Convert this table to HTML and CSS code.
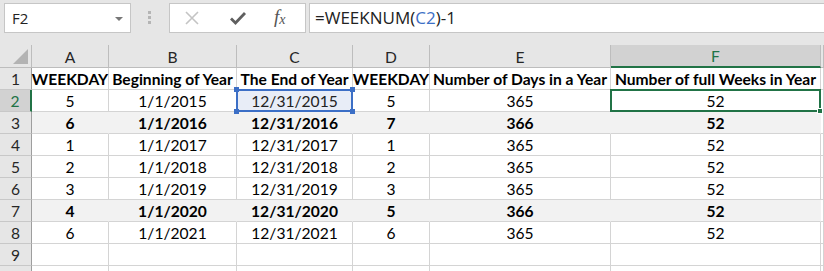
FILE: index.html
```html
<!DOCTYPE html>
<html>
<head lang="en">
    <meta charset="UTF-8">
    <title>Weeks in Year</title>
    <link rel="stylesheet" href="styles.css">
</head>
<body>
<div id="window">
    <div class="formula-bar">
        <div class="name-box">
            <span>F2</span>
            <span class="drop"></span>
        </div>
        <div class="grip"><i></i><i></i><i></i></div>
        <div class="fx-box">
            <svg class="ico-cancel" width="16" height="16" viewBox="0 0 16 16">
                <path d="M2 2 L14 14 M14 2 L2 14" stroke="#c4c4c4" stroke-width="1.6" fill="none"/>
            </svg>
            <svg class="ico-enter" width="18" height="16" viewBox="0 0 18 16">
                <path d="M2 8.5 L6.5 13 L16 3" stroke="#5f5f5f" stroke-width="2.8" fill="none"/>
            </svg>
            <span class="fx">f<sub>x</sub></span>
        </div>
        <div class="formula">=WEEKNUM(<span class="ref">C2</span>)-1</div>
    </div>

    <div class="sheet">
        <div class="corner"><span class="tri"></span></div>
        <div class="col-hd">A</div>
        <div class="col-hd">B</div>
        <div class="col-hd">C</div>
        <div class="col-hd">D</div>
        <div class="col-hd">E</div>
        <div class="col-hd active">F</div>
        <div class="col-hd"></div>

        <div class="row-hd">1</div>
        <div class="cell b">WEEKDAY</div>
        <div class="cell b">Beginning of Year</div>
        <div class="cell b">The End of Year</div>
        <div class="cell b">WEEKDAY</div>
        <div class="cell b">Number of Days in a Year</div>
        <div class="cell b">Number of full Weeks in Year</div>
        <div class="cell"></div>

        <div class="row-hd active">2</div>
        <div class="cell">5</div>
        <div class="cell">1/1/2015</div>
        <div class="cell ref-cell">12/31/2015<span class="h tl"></span><span class="h tr"></span><span class="h bl"></span><span class="h br"></span></div>
        <div class="cell">5</div>
        <div class="cell">365</div>
        <div class="cell current">52<span class="fill-handle"></span></div>
        <div class="cell"></div>

        <div class="row-hd">3</div>
        <div class="cell b leap">6</div>
        <div class="cell b leap">1/1/2016</div>
        <div class="cell b leap">12/31/2016</div>
        <div class="cell b leap">7</div>
        <div class="cell b leap">366</div>
        <div class="cell b leap">52</div>
        <div class="cell"></div>

        <div class="row-hd">4</div>
        <div class="cell">1</div>
        <div class="cell">1/1/2017</div>
        <div class="cell">12/31/2017</div>
        <div class="cell">1</div>
        <div class="cell">365</div>
        <div class="cell">52</div>
        <div class="cell"></div>

        <div class="row-hd">5</div>
        <div class="cell">2</div>
        <div class="cell">1/1/2018</div>
        <div class="cell">12/31/2018</div>
        <div class="cell">2</div>
        <div class="cell">365</div>
        <div class="cell">52</div>
        <div class="cell"></div>

        <div class="row-hd">6</div>
        <div class="cell">3</div>
        <div class="cell">1/1/2019</div>
        <div class="cell">12/31/2019</div>
        <div class="cell">3</div>
        <div class="cell">365</div>
        <div class="cell">52</div>
        <div class="cell"></div>

        <div class="row-hd">7</div>
        <div class="cell b leap">4</div>
        <div class="cell b leap">1/1/2020</div>
        <div class="cell b leap">12/31/2020</div>
        <div class="cell b leap">5</div>
        <div class="cell b leap">366</div>
        <div class="cell b leap">52</div>
        <div class="cell"></div>

        <div class="row-hd">8</div>
        <div class="cell">6</div>
        <div class="cell">1/1/2021</div>
        <div class="cell">12/31/2021</div>
        <div class="cell">6</div>
        <div class="cell">365</div>
        <div class="cell">52</div>
        <div class="cell"></div>

        <div class="row-hd">9</div>
        <div class="cell"></div>
        <div class="cell"></div>
        <div class="cell"></div>
        <div class="cell"></div>
        <div class="cell"></div>
        <div class="cell"></div>
        <div class="cell"></div>

        <div class="row-hd"></div>
        <div class="cell"></div>
        <div class="cell"></div>
        <div class="cell"></div>
        <div class="cell"></div>
        <div class="cell"></div>
        <div class="cell"></div>
        <div class="cell"></div>
    </div>
</div>
</body>
</html>
```

FILE: styles.css
```css
* {
    padding: 0;
    margin: 0;
    box-sizing: border-box;
}

body {
    background: #ffffff;
    font-family: "Lato", "Liberation Sans", sans-serif;
    overflow: hidden;
}

#window {
    width: 824px;
    height: 271px;
    overflow: hidden;
    background: #e6e6e6;
}

/* formula bar */
.formula-bar {
    display: flex;
    align-items: flex-start;
    height: 45px;
    padding: 3px 0 0 4px;
}

.name-box {
    display: flex;
    align-items: center;
    justify-content: space-between;
    width: 127px;
    height: 30px;
    background: #ffffff;
    border: 1px solid #c6c6c6;
    padding: 0 7px 0 7px;
    font-family: "Open Sans", "Noto Sans", sans-serif;
    font-size: 15px;
    color: #222222;
}

.drop {
    width: 0;
    height: 0;
    border-left: 4px solid transparent;
    border-right: 4px solid transparent;
    border-top: 4px solid #777777;
    margin-top: 1px;
}

.grip {
    display: flex;
    flex-direction: column;
    gap: 2px;
    width: 38px;
    padding: 8px 0 0 17px;
}

.grip i {
    display: block;
    width: 3px;
    height: 3px;
    background: #b5b5b5;
}

.fx-box {
    display: flex;
    align-items: center;
    width: 137px;
    height: 30px;
    background: #ffffff;
    border: 1px solid #c6c6c6;
    padding-left: 14px;
}

.ico-cancel {
    margin-right: 29px;
}

.ico-enter {
    margin-right: 27px;
}

.fx {
    font-family: "Liberation Serif", serif;
    font-style: italic;
    font-size: 19px;
    color: #555555;
    line-height: 1;
    margin-top: -3px;
}

.fx sub {
    font-size: 14px;
    vertical-align: -1px;
}

.formula {
    flex: 1;
    height: 30px;
    margin-left: 3px;
    background: #ffffff;
    border: 1px solid #c6c6c6;
    border-right: none;
    padding: 2px 0 0 5px;
    font-family: "Open Sans", "Noto Sans", sans-serif;
    font-size: 17px;
    color: #222222;
}

.formula .ref {
    color: #3c6fc6;
}

/* sheet grid */
.sheet {
    display: grid;
    grid-template-columns: 32px 77px 128px 116px 77px 181px 210px 1fr;
    grid-template-rows: 23px;
    grid-auto-rows: 22px;
    background: #ffffff;
    font-size: 15.6px;
    color: #000000;
}

.corner {
    position: relative;
    background: #e6e6e6;
    border-right: 1px solid #bdbdbd;
    border-bottom: 1px solid #bdbdbd;
}

.corner .tri {
    position: absolute;
    right: 3px;
    bottom: 3px;
    width: 0;
    height: 0;
    border-left: 15px solid transparent;
    border-bottom: 15px solid #b3b3b3;
}

.col-hd {
    display: flex;
    align-items: center;
    justify-content: center;
    background: #e6e6e6;
    border-right: 1px solid #bdbdbd;
    border-bottom: 1px solid #bdbdbd;
    color: #262626;
    padding-top: 1px;
}

.col-hd.active {
    background: #d2d2d2;
    color: #217346;
    border-bottom: 2px solid #217346;
}

.row-hd {
    display: flex;
    align-items: center;
    justify-content: center;
    background: #e6e6e6;
    border-right: 1px solid #9e9e9e;
    border-bottom: 1px solid #c8c8c8;
    color: #262626;
}

.row-hd.active {
    background: #d2d2d2;
    color: #217346;
    border-right: 2px solid #217346;
}

.cell {
    display: flex;
    align-items: center;
    justify-content: center;
    white-space: nowrap;
    border-right: 1px solid #d4d4d4;
    border-bottom: 1px solid #d4d4d4;
    padding-top: 1px;
}

.cell.b {
    font-weight: bold;
}

.cell.leap {
    background: #f2f2f2;
    border-right-color: #f2f2f2;
}

/* referenced cell of the formula */
.ref-cell {
    position: relative;
    background: #e8edf7;
    color: #222222;
}

.ref-cell::after {
    content: "";
    position: absolute;
    top: -1px;
    left: -1px;
    right: -1px;
    bottom: -1px;
    border: 2px solid #3c6fc6;
}

.ref-cell .h {
    position: absolute;
    width: 5px;
    height: 5px;
    background: #3c6fc6;
    z-index: 2;
}

.ref-cell .tl { top: -3px; left: -3px; }
.ref-cell .tr { top: -3px; right: -3px; }
.ref-cell .bl { bottom: -3px; left: -3px; }
.ref-cell .br { bottom: -3px; right: -3px; }

/* active cell */
.current {
    position: relative;
}

.current::after {
    content: "";
    position: absolute;
    top: -1px;
    left: -1px;
    right: -1px;
    bottom: -1px;
    border: 2px solid #217346;
}

.fill-handle {
    position: absolute;
    right: -3px;
    bottom: -3px;
    width: 6px;
    height: 6px;
    background: #217346;
    border: 1px solid #ffffff;
    z-index: 2;
}
```
